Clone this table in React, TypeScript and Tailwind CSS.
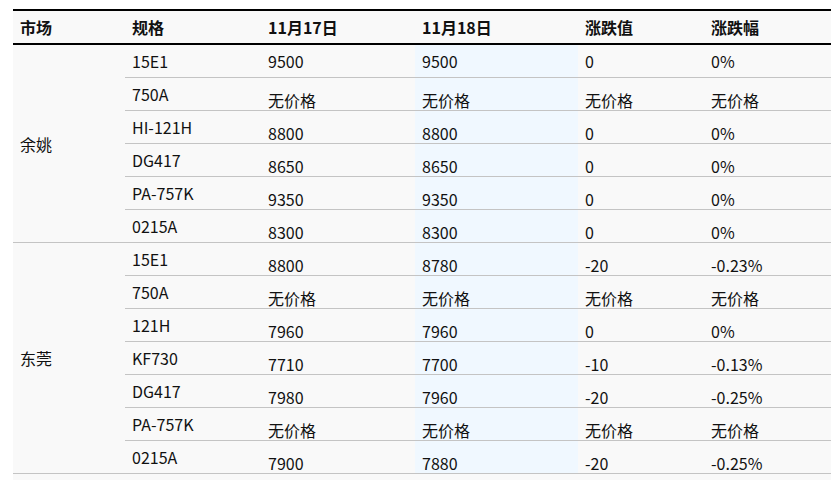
import React from "react";

type Row = { spec: string; d17: string; d18: string; chg: string; pct: string };

const NP = "无价格";

const GROUPS: { market: string; rows: Row[] }[] = [
  {
    market: "余姚",
    rows: [
      { spec: "15E1", d17: "9500", d18: "9500", chg: "0", pct: "0%" },
      { spec: "750A", d17: NP, d18: NP, chg: NP, pct: NP },
      { spec: "HI-121H", d17: "8800", d18: "8800", chg: "0", pct: "0%" },
      { spec: "DG417", d17: "8650", d18: "8650", chg: "0", pct: "0%" },
      { spec: "PA-757K", d17: "9350", d18: "9350", chg: "0", pct: "0%" },
      { spec: "0215A", d17: "8300", d18: "8300", chg: "0", pct: "0%" },
    ],
  },
  {
    market: "东莞",
    rows: [
      { spec: "15E1", d17: "8800", d18: "8780", chg: "-20", pct: "-0.23%" },
      { spec: "750A", d17: NP, d18: NP, chg: NP, pct: NP },
      { spec: "121H", d17: "7960", d18: "7960", chg: "0", pct: "0%" },
      { spec: "KF730", d17: "7710", d18: "7700", chg: "-10", pct: "-0.13%" },
      { spec: "DG417", d17: "7980", d18: "7960", chg: "-20", pct: "-0.25%" },
      { spec: "PA-757K", d17: NP, d18: NP, chg: NP, pct: NP },
      { spec: "0215A", d17: "7900", d18: "7880", chg: "-20", pct: "-0.25%" },
    ],
  },
];

function Cell({ children, className = "" }: { children: React.ReactNode; className?: string }) {
  return <div className={`flex items-center pl-[7px] ${className}`}>{children}</div>;
}

export default function App() {
  return (
    <div className="min-h-[480px] bg-white pt-[9px] pl-[13px] text-[16px] text-[#111] [font-family:'Noto_Sans_CJK_SC','Noto_Sans',sans-serif]">
      <div className="w-[818px] bg-[#f9f9f9]">
        {/* header */}
        <div className="flex h-[36px] border-y-2 border-black font-bold">
          <Cell className="w-[112px]">市场</Cell>
          <Cell className="w-[136px]">规格</Cell>
          <Cell className="w-[154px]">11月17日</Cell>
          <Cell className="w-[163px]">11月18日</Cell>
          <Cell className="w-[126px]">涨跌值</Cell>
          <Cell className="w-[127px]">涨跌幅</Cell>
        </div>

        {GROUPS.map((g, gi) => (
          <div key={g.market} className="flex border-b border-[#c4c4c4]">
            <Cell className="w-[112px]">{g.market}</Cell>
            <div className="flex flex-col">
              {g.rows.map((r, ri) => {
                const last = ri === g.rows.length - 1;
                // values sit a bit lower than the spec, except the very first row
                const shift = gi === 0 && ri === 0 ? "" : "pt-[12px]";
                return (
                  <div key={r.spec} className={`flex h-[32px] ${last ? "" : "h-[33px] border-b border-[#c4c4c4]"}`}>
                    <Cell className="w-[136px]">{r.spec}</Cell>
                    <Cell className={`w-[154px] ${shift}`}>{r.d17}</Cell>
                    <Cell className={`w-[163px] bg-[#f0f8ff] ${shift}`}>{r.d18}</Cell>
                    <Cell className={`w-[126px] ${shift}`}>{r.chg}</Cell>
                    <Cell className={`w-[127px] ${shift}`}>{r.pct}</Cell>
                  </div>
                );
              })}
            </div>
          </div>
        ))}
        <div className="h-[20px]" />
      </div>
    </div>
  );
}
